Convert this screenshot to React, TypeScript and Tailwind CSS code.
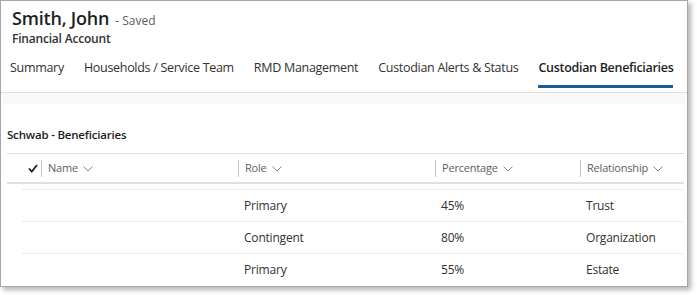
import React from 'react'

const rows = [
  { role: 'Primary', pct: '45%', rel: 'Trust' },
  { role: 'Contingent', pct: '80%', rel: 'Organization' },
  { role: 'Primary', pct: '55%', rel: 'Estate' },
]

const tabs = ['Summary', 'Households / Service Team', 'RMD Management', 'Custodian Alerts & Status', 'Custodian Beneficiaries']

function Chevron() {
  return (
    <svg width="10" height="6" viewBox="0 0 10 6" className="ml-[5px] mt-[1px]">
      <path d="M0.5 0.5 L5 5 L9.5 0.5" fill="none" stroke="#8a8886" strokeWidth="1" />
    </svg>
  )
}

function HeaderCell({ label, width }: { label: string; width: string }) {
  return (
    <div className={`flex items-center ${width}`}>
      <div className="w-px h-[17px] bg-[#c8c6c4]" />
      <div className="flex items-center pl-[6px] text-[11px] text-[#605e5c] tracking-[-0.2px]">
        {label}
        <Chevron />
      </div>
    </div>
  )
}

export default function App() {
  return (
    <div className="w-[697px] h-[295px] bg-white" style={{ fontFamily: '"Open Sans", "Noto Sans", sans-serif' }}>
      <div className="w-[688px] h-[287px] border border-[#a6a6a6] bg-white shadow-[3px_3px_5px_rgba(0,0,0,0.3)] flex flex-col overflow-hidden">
        {/* record header */}
        <div className="pl-[11px] pt-[5px]">
          <div className="flex items-baseline gap-[6px]">
            <span className="text-[18px] font-semibold text-[#201f1e] leading-[24px] tracking-[-0.2px]">Smith, John</span>
            <span className="text-[12px] text-[#605e5c]">- Saved</span>
          </div>
          <div className="text-[12px] font-semibold text-[#323130] leading-[16px] mt-[1px] tracking-[-0.2px]">Financial Account</div>
        </div>

        {/* tabs */}
        <div className="flex gap-[20px] pl-[9px] mt-[7px] h-[39px] border-b border-[#e1dfdd] shadow-[0_1px_2px_rgba(0,0,0,0.08)]">
          {tabs.map((t) => {
            const active = t === 'Custodian Beneficiaries'
            return (
              <div key={t} className="relative h-full shrink-0">
                <span className={`whitespace-nowrap text-[12.5px] leading-[18px] tracking-[-0.3px] ${active ? 'font-semibold text-[#201f1e]' : 'text-[#323130]'}`}>{t}</span>
                {active && <div className="absolute left-0 right-0 bottom-[4px] h-[3px] bg-[#1c5a96]" />}
              </div>
            )
          })}
        </div>
        <div className="h-[11px] mx-[2px] bg-[#f8f8f8]" />

        {/* beneficiaries section */}
        <div className="pl-[6px] pr-[3px] pt-[23px]">
          <div className="text-[11.5px] font-semibold text-[#201f1e] leading-[16px] pb-[10px] border-b border-[#e1dfdd] tracking-[-0.2px]">Schwab - Beneficiaries</div>

          <div className="flex items-center h-[30px] border-b-2 border-[#e1dfdd]">
            <div className="w-[34px] flex justify-end pr-[3px]">
              <svg width="10" height="9" viewBox="0 0 10 9">
                <path d="M1 4.5 L3.8 7.5 L9 1" fill="none" stroke="#201f1e" strokeWidth="1.8" />
              </svg>
            </div>
            <HeaderCell label="Name" width="w-[197px]" />
            <HeaderCell label="Role" width="w-[197px]" />
            <HeaderCell label="Percentage" width="w-[145px]" />
            <HeaderCell label="Relationship" width="flex-1" />
          </div>

          <div className="ml-[15px] mt-[5px]">
            {rows.map((r, i) => (
              <div key={i} className="flex items-center h-[32px] border-t border-[#edebe9] text-[12px] text-[#323130] tracking-[-0.2px]">
                <div className="w-[222px]" />
                <div className="w-[197px]">{r.role}</div>
                <div className="w-[145px]">{r.pct}</div>
                <div className="flex-1">{r.rel}</div>
              </div>
            ))}
          </div>
        </div>
      </div>
    </div>
  )
}
